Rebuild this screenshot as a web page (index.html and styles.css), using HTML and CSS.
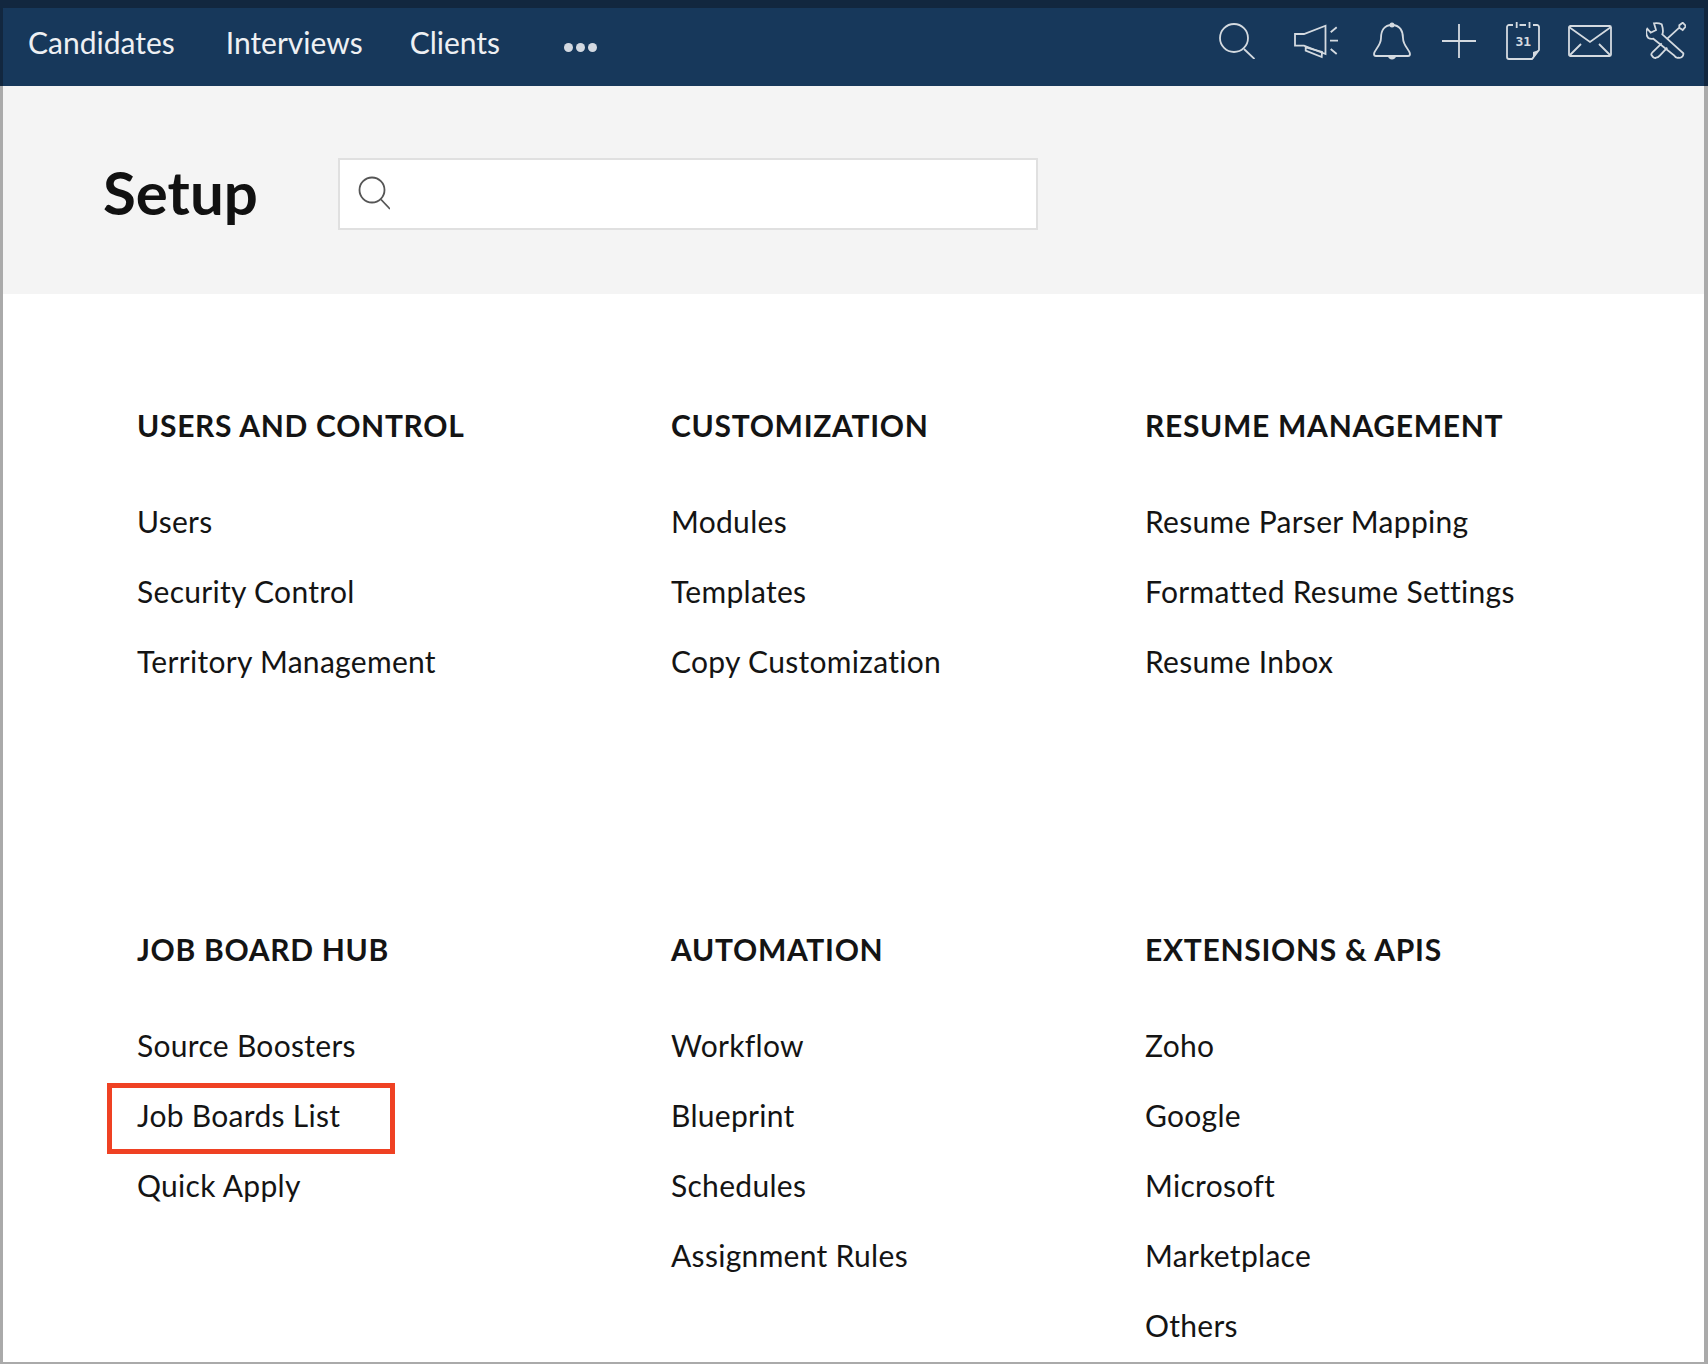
FILE: index.html
```html
<!DOCTYPE html>
<html lang="en">
<head>
<meta charset="utf-8">
<title>Setup</title>
<link rel="stylesheet" href="styles.css">
</head>
<body>
<nav class="nav-wrap">
  <div class="nav">
    <a class="nav-link nav-c">Candidates</a>
    <a class="nav-link nav-i">Interviews</a>
    <a class="nav-link nav-l">Clients</a>
    <span class="dots"><i></i><i></i><i></i></span>
    <div class="icons">
      <svg class="ic ic-search" viewBox="0 0 36 36"><circle cx="15" cy="15" r="14"/><path d="M25 26 35.500 36"/></svg>
      <svg class="ic ic-mega" viewBox="0 0 44 36"><path d="M1 11H10L31.500 2.700V31L10 22.700H1Z"/><path d="M11.700 24.300 28 29 27.700 34 11.700 27.700Z"/><path d="M36.700 9.300 42.700 4.300M36 17.700H44M36.700 26 42.700 31"/></svg>
      <svg class="ic ic-bell" viewBox="0 0 38 38"><path d="M19 3C11 3 8 9 8 16C8 24 1 28 1 32C1 33 2 34 3 34H35C36 34 37 33 37 32C37 28 30 24 30 16C30 9 27 3 19 3Z"/><circle class="fill" cx="19" cy="3" r="2.500"/><path class="fill" d="M15 34H23C23 36 21 37.500 19 37.500C17 37.500 15 36 15 34Z"/></svg>
      <svg class="ic ic-plus" viewBox="0 0 34 34"><path d="M17 0V34M0 17H34"/></svg>
      <svg class="ic ic-cal" viewBox="0 0 34 38"><path d="M7 3H3C2 3 1 4 1 5V35C1 36.500 2 37 3 37H26L33 28V5C33 4 32 3 31 3H27M13.500 3H20M10.700 0V6M23.500 0V6"/><path class="fill" d="M27 37 33 28 27 30Z"/><text class="cal-day" x="17.300" y="24">31</text></svg>
      <svg class="ic ic-mail" viewBox="0 0 44 32"><rect x="1" y="1" width="42" height="30" rx="1.500"/><path d="M1 2 22 17 43 2M2 30 13 19M42 30 31 19"/></svg>
      <svg class="ic ic-tools" viewBox="0 0 40 38"><path d="M8 1.300 10 8 4.700 10.700 1.300 6.700C0 9 0 13 2.300 16 4 17 6 17 7.300 16.700L28 33.300C29 35 31 36 32.300 35.700 34 36 36 35 36.300 34.700 37.500 33 37.500 32 37.300 31.300L16.300 12.300C17.500 10 17.500 8 15.700 2.300 13 1 10 1 8 1.300Z"/><path d="M21.300 16.700 33.300 5.700M33.300 3.300 36.700 0.700 40 4 36.700 8 33.300 5.700Z"/><path d="M15.700 21.300 6.700 30C5 32 5 33 5.700 33.300 7 35.700 9 36.500 10 35.700 12 35.700 13 34.500 14 33.300L21.300 25.700"/></svg>
    </div>
  </div>
</nav>
<div class="frame">
  <header class="head">
    <h1 class="title">Setup</h1>
    <div class="search">
      <svg class="search-ic" viewBox="0 0 32 34"><circle cx="14" cy="14" r="12.500"/><path d="M23 23.500 32 33"/></svg>
    </div>
  </header>
  <main class="grid">
    <section class="group">
      <h2 class="group-title">USERS AND CONTROL</h2>
      <ul class="list"><li>Users</li><li>Security Control</li><li>Territory Management</li></ul>
    </section>
    <section class="group">
      <h2 class="group-title">CUSTOMIZATION</h2>
      <ul class="list"><li>Modules</li><li>Templates</li><li>Copy Customization</li></ul>
    </section>
    <section class="group">
      <h2 class="group-title">RESUME MANAGEMENT</h2>
      <ul class="list"><li>Resume Parser Mapping</li><li>Formatted Resume Settings</li><li>Resume Inbox</li></ul>
    </section>
    <section class="group">
      <h2 class="group-title">JOB BOARD HUB</h2>
      <ul class="list"><li>Source Boosters</li><li class="marked">Job Boards List</li><li>Quick Apply</li></ul>
    </section>
    <section class="group">
      <h2 class="group-title">AUTOMATION</h2>
      <ul class="list"><li>Workflow</li><li>Blueprint</li><li>Schedules</li><li>Assignment Rules</li></ul>
    </section>
    <section class="group">
      <h2 class="group-title">EXTENSIONS &amp; APIS</h2>
      <ul class="list"><li>Zoho</li><li>Google</li><li>Microsoft</li><li>Marketplace</li><li>Others</li></ul>
    </section>
  </main>
</div>
</body>
</html>
```
FILE: styles.css
```css
*, *::after { box-sizing: border-box; }
html, body { margin: 0; padding: 0; height: 100%; overflow: hidden; background: #fff; }
body { font-family: Lato, "Noto Sans", sans-serif; color: #141414; font-variant-ligatures: none; }
.nav-wrap { height: 86px; padding: 8px 4px 0 3px; background: #12273f; }
.nav { height: 78px; background: #17385b; display: flex; align-items: center; color: #eef0f3; font-size: 30px; }
.nav-link { line-height: 1; padding-bottom: 10px; }
.nav-c { margin-left: 25px; }
.nav-i { margin-left: 51px; }
.nav-l { margin-left: 47px; }
.dots { display: flex; gap: 3px; margin-left: 64px; }
.dots i { width: 9px; height: 9px; border-radius: 50%; background: #d3d9e1; }
.icons { margin-left: auto; display: flex; align-items: center; padding-right: 18px; padding-bottom: 12px; }
.ic { fill: none; stroke: #d4dae0; stroke-width: 1.800; flex: none; }
.ic .fill { fill: #d4dae0; stroke: none; }
.cal-day { fill: #d4dae0; stroke: none; font-family: "DejaVu Sans Mono", monospace; font-size: 13px; font-weight: 700; text-anchor: middle; }
.ic-search { width: 36px; height: 36px; }
.ic-mega { width: 44px; height: 36px; margin-left: 39px; }
.ic-bell { width: 38px; height: 38px; margin-left: 35px; }
.ic-plus { width: 34px; height: 34px; margin-left: 31px; }
.ic-cal { width: 34px; height: 38px; margin-left: 30px; }
.ic-mail { width: 44px; height: 32px; margin-left: 28px; }
.ic-tools { width: 40px; height: 38px; margin-left: 34px; }
.frame { height: 1278px; border-left: 3px solid #aaa; border-right: 4px solid #aaa; border-bottom: 2px solid #aaa; overflow: hidden; }
.head { height: 208px; background: #f4f4f4; display: flex; align-items: center; padding-left: 100px; padding-top: 8px; }
.title { margin: 0 0 5px; width: 235px; font-size: 60px; font-weight: 700; line-height: 1; color: #111; }
.search { width: 700px; height: 72px; background: #fff; border: 2px solid #e0e0e0; display: flex; align-items: center; padding: 0 0 3px 18px; }
.search-ic { width: 32px; height: 34px; fill: none; stroke: #555; stroke-width: 1.800; }
.grid { display: grid; grid-template-columns: 534px 474px 1fr; grid-auto-rows: 524px; padding: 111px 0 0 134px; }
.group-title { margin: 0; font-size: 30px; font-weight: 700; line-height: 40px; letter-spacing: 0.7px; color: #141414; }
.list { list-style: none; margin: 41px 0 0; padding: 0; font-size: 30px; letter-spacing: 0.3px; }
.list li { height: 70px; line-height: 70px; }
.marked { position: relative; }
.marked::after { content: ""; position: absolute; left: -30px; top: 3px; width: 288px; height: 71px; border: 5px solid #ef4123; }
```
